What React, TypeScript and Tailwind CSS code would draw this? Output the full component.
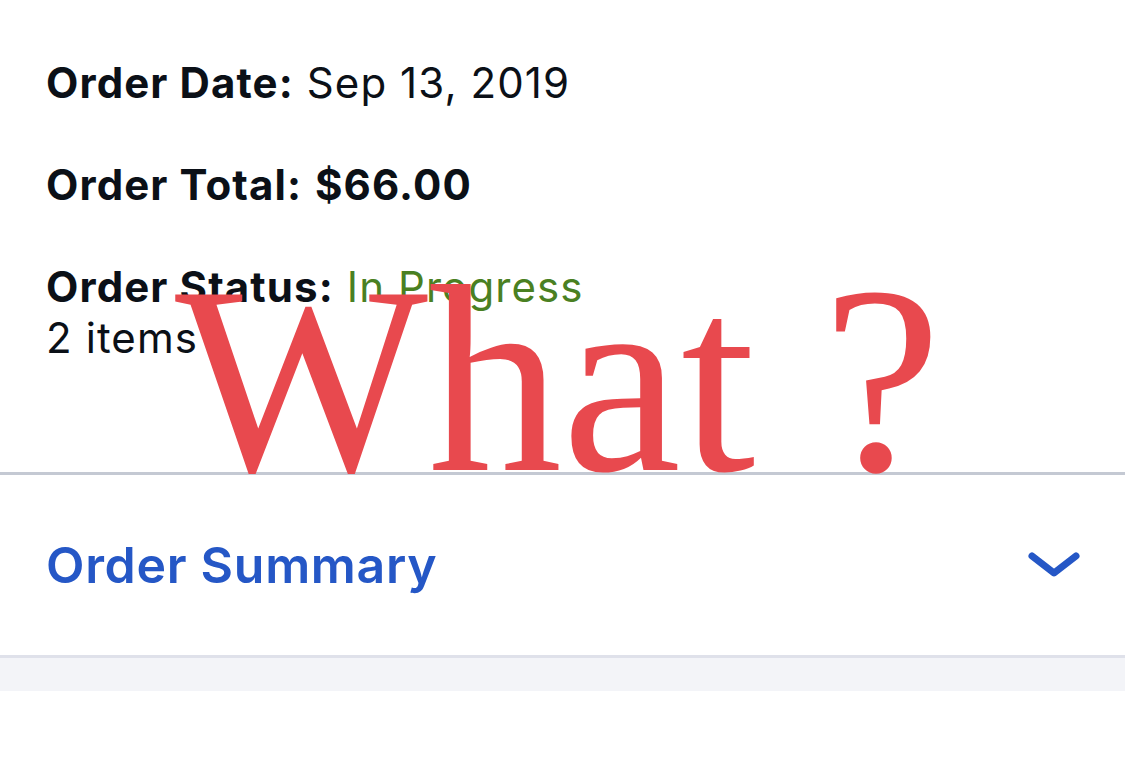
import React from "react"

const OrderRow = ({ label, children }: { label: string; children: React.ReactNode }) => (
    <div className="text-[42px] leading-[51px] tracking-[1.1px] text-[#0b1017]">
        <span className="font-bold">{label}</span> {children}
    </div>
)

const App = () => {
    return (
        <main className="relative w-[1125px] h-[763px] overflow-hidden bg-white font-['Inter','Liberation_Sans',sans-serif]">
            {/* Order info */}
            <section className="flex flex-col gap-[51px] pl-[46px] pt-[57px] pb-[109px]">
                <OrderRow label="Order Date:">
                    <span className="font-normal">Sep 13, 2019</span>
                </OrderRow>
                <OrderRow label="Order Total:">
                    <span className="font-bold">$66.00</span>
                </OrderRow>
                <div>
                    <OrderRow label="Order Status:">
                        <span className="font-normal text-[#4a8022]">In Progress</span>
                    </OrderRow>
                    <div className="text-[42px] leading-[51px] tracking-[1.1px] text-[#0b1017]">2 items</div>
                </div>
            </section>

            {/* Order summary toggle */}
            <button className="flex w-full h-[186px] items-center justify-between border-t-[3px] border-b-[3px] border-t-[#c4c9d3] border-b-[#dfe1ea] pl-[46px] pr-[45px]">
                <span className="text-[50px] leading-[60px] tracking-[0.7px] font-semibold text-[#2557c6]">Order Summary</span>
                <svg width="52" height="28" viewBox="0 0 52 28" fill="none">
                    <path d="M4 5 L26 22 L48 5" stroke="#2557c6" strokeWidth="7" strokeLinecap="round" strokeLinejoin="round" />
                </svg>
            </button>
            <div className="h-[33px] bg-[#f3f4f8]" />

            {/* Red overlay caption */}
            <div className="absolute left-[175px] top-[246px] pointer-events-none font-['Liberation_Serif','Times_New_Roman',serif] text-[268px] leading-none text-[#e8494e] whitespace-nowrap">
                What ?
            </div>
        </main>
    )
}

export default App
